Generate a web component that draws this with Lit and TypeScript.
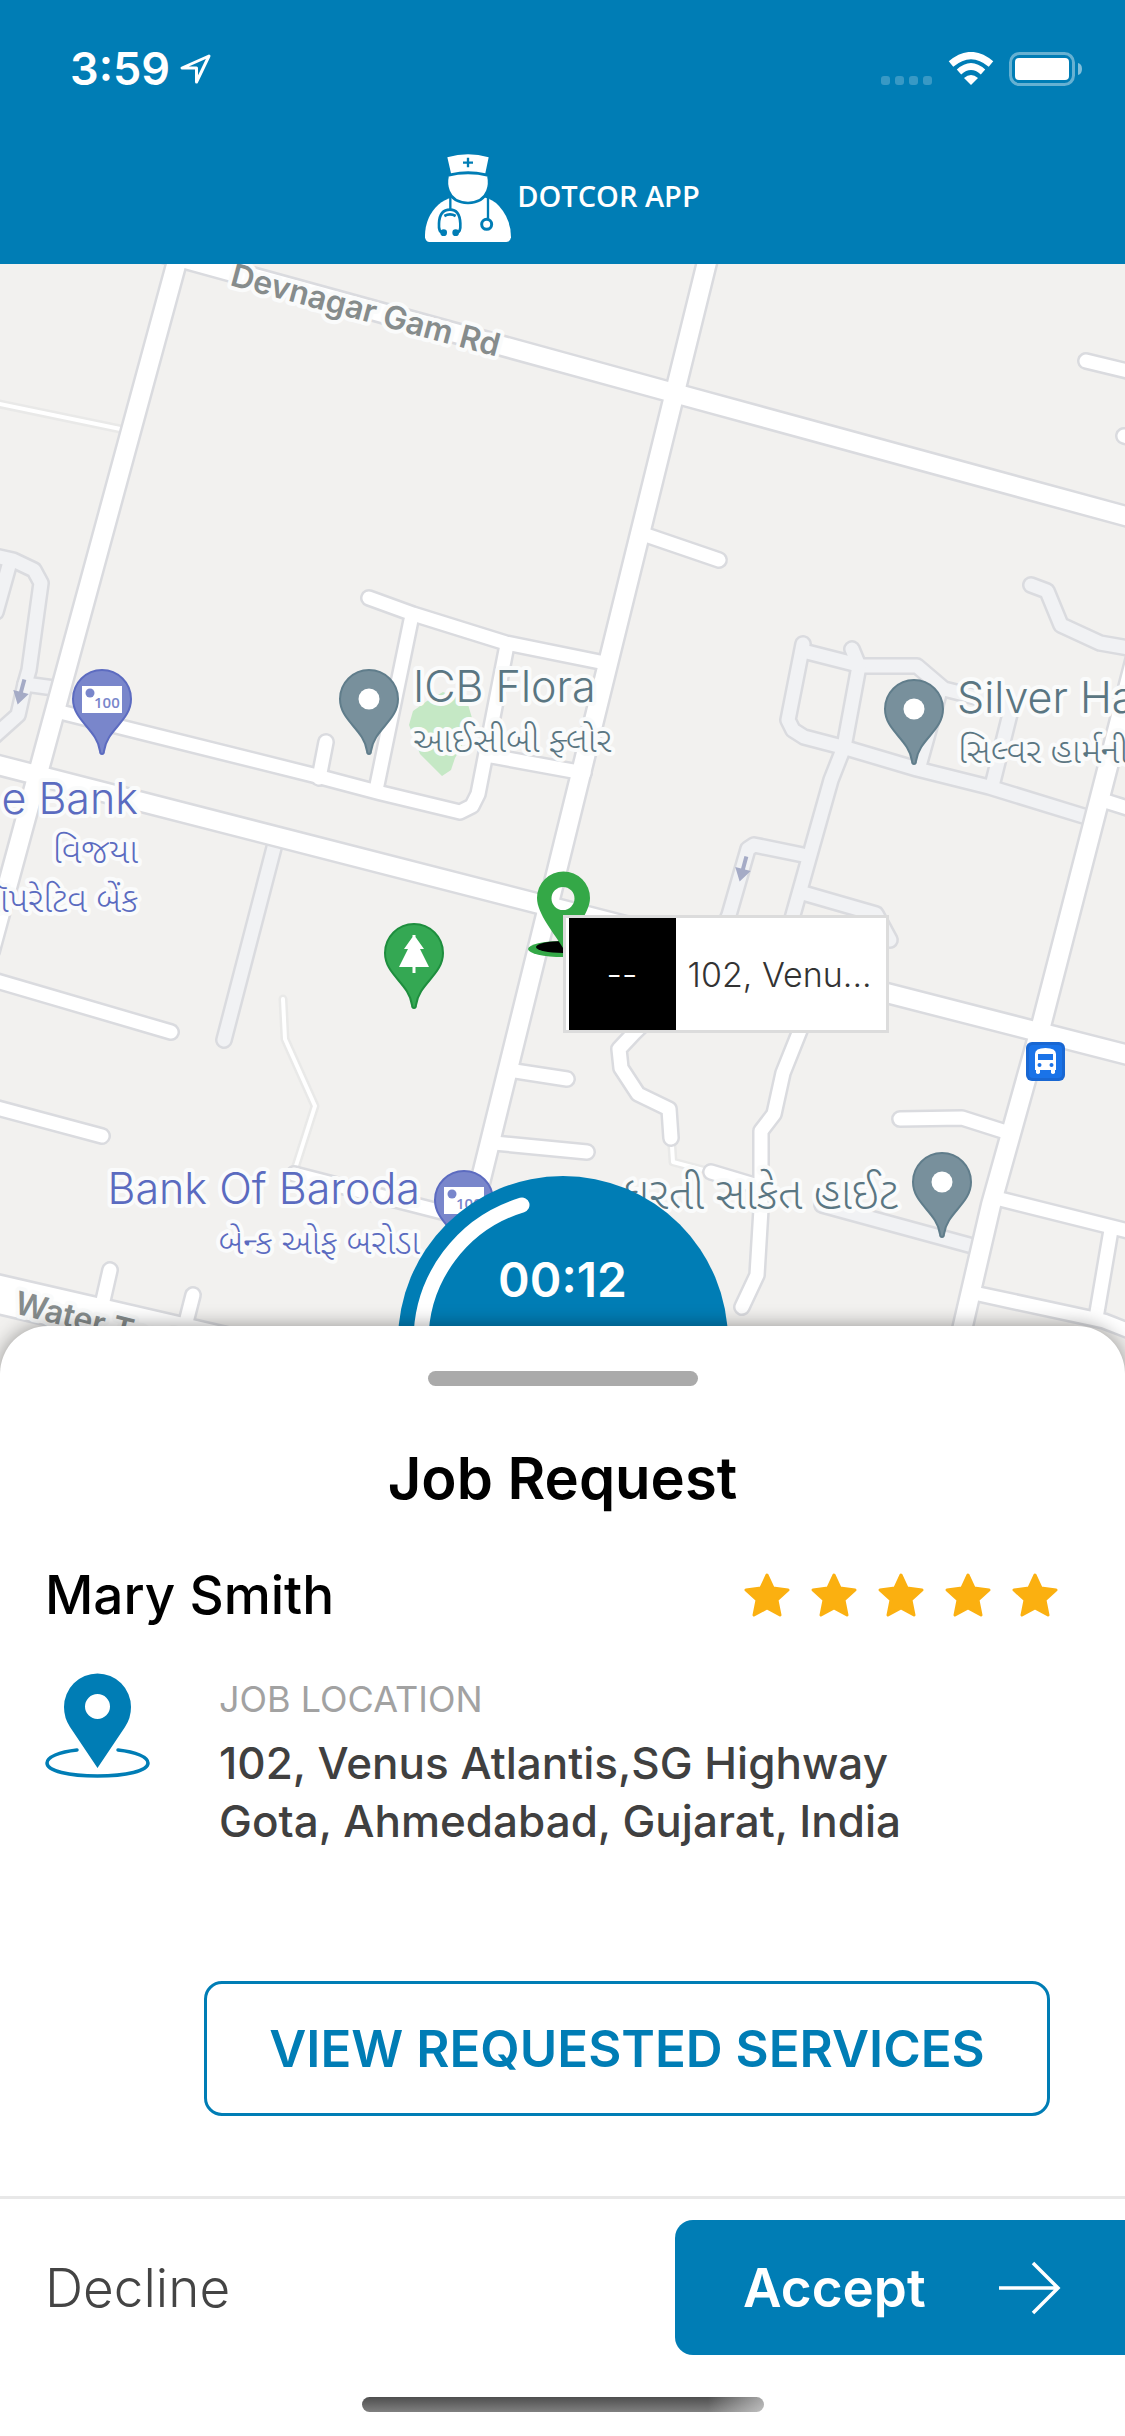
import { LitElement, html, svg, css } from "lit";
import { customElement, property } from "lit/decorators.js";

type Tone = "main" | "side" | "lane" | "path" | "wide";
interface Road { tone: Tone; points: string; }

/* Streets as polylines on the map canvas. */
const ROADS: Road[] = [
  { tone: "lane", points: "-10,555 13,560 34,570 41,583 29,670 25,684 18,715 -10,740" },
  { tone: "lane", points: "25,684 54,688" },
  { tone: "lane", points: "10,562 -4,612" },
  { tone: "lane", points: "803,644 788,720 793,730 804,737 846,748 917,769 989,787 1090,818" },
  { tone: "lane", points: "803,651 862,666 917,666 944,689 1012,706 993,782" },
  { tone: "lane", points: "852,649 859,666 844,747 831,780 793,915 770,1000" },
  { tone: "lane", points: "939,694 919,766" },
  { tone: "lane", points: "1031,585 1047,591 1061,625 1100,643 1140,650" },
  { tone: "lane", points: "803,855 754,845 748,849 729,915 710,960" },
  { tone: "lane", points: "803,893 876,914 890,940" },
  { tone: "lane", points: "276,840 224,1040" },
  { tone: "lane", points: "822,1205 980,1248" },
  { tone: "path", points: "-10,402 130,431" },
  { tone: "path", points: "283,999 285,1039 315,1106 294,1172" },
  { tone: "path", points: "671,1130 673,1162 711,1172" },
  { tone: "side", points: "369,598 413,614 506,643 600,662" },
  { tone: "side", points: "411,620 376,790" },
  { tone: "side", points: "507,645 478,794 472,806 460,812 381,793 313,775 60,712" },
  { tone: "side", points: "326,742 319,778" },
  { tone: "side", points: "486,755 584,773" },
  { tone: "side", points: "640,533 719,560" },
  { tone: "side", points: "1086,361 1140,374" },
  { tone: "side", points: "1124,436 1150,442" },
  { tone: "side", points: "-10,979 171,1032" },
  { tone: "side", points: "-10,1106 102,1136" },
  { tone: "side", points: "294,1174 450,1214" },
  { tone: "side", points: "508,1070 567,1079" },
  { tone: "side", points: "494,1143 587,1152" },
  { tone: "side", points: "660,1008 634,1033 619,1049 621,1068 638,1094 669,1109 671,1138" },
  { tone: "side", points: "808,1010 799,1033 783,1073 774,1114 761,1131 761,1209 757,1275 742,1307" },
  { tone: "side", points: "711,1172 761,1187" },
  { tone: "side", points: "900,1119 962,1118 1006,1132" },
  { tone: "side", points: "996,1198 1140,1234" },
  { tone: "side", points: "1111,1230 1096,1318" },
  { tone: "side", points: "974,1293 1104,1321 1140,1335" },
  { tone: "side", points: "1102,800 1140,812" },
  { tone: "wide", points: "-20,1290 97,1317 240,1350" },
  { tone: "side", points: "110,1270 102,1305" },
  { tone: "side", points: "193,1295 184,1330" },
  { tone: "main", points: "179,254 40,766 -10,950" },
  { tone: "main", points: "120,241 674,393 1140,520" },
  { tone: "main", points: "709,254 440,1345" },
  { tone: "main", points: "-10,763 1140,1058" },
  { tone: "main", points: "1138,650 1041,1026 991,1205 955,1360" },
];

const CASING: Record<Tone, number> = { main: 23, side: 18, lane: 18, path: 9, wide: 42 };

@customElement("area-map")
export class AreaMap extends LitElement {
  static styles = css`
    :host { display: block; position: absolute; inset: 0; }
    .canvas { display: block; width: 100%; height: 100%; background: #f2f1ef; }
    polyline { fill: none; stroke-linecap: round; stroke-linejoin: round; }
    .casing { stroke: #dadbdf; }
    .casing.path { stroke: #e9e9e8; }
    .fill { stroke: #ffffff; }
    .fill.lane { stroke: #f1f2f4; }
    .park { fill: #c5e8c5; }
    .direction { fill: #a5abc6; }
    .label {
      font-family: Inter, "Noto Sans", sans-serif;
      font-weight: 300;
      font-size: 43px;
      paint-order: stroke;
      stroke: #fafbfb;
      stroke-width: 8px;
      stroke-linejoin: round;
    }
    .local { font-family: "Noto Sans Gujarati", "Noto Sans", sans-serif; font-size: 35px; }
    .local.large { font-size: 44px; }
    .place { fill: #5a7682; }
    .bank { fill: #5b6bc0; }
    .street { fill: #868c8c; font-size: 32px; font-weight: 600; }
    .end { text-anchor: end; }
    .note { font-family: "Open Sans", sans-serif; font-size: 15px; font-weight: 600; fill: #7986cb; }
  `;

  private pin(x: number, y: number, fill: string, edge: string, glyph: unknown) {
    return svg`<g transform="translate(${x} ${y})">
      <path d="M0 55C-1 55-2 54-2 52C-5 30-29 22-29 0A29 29 0 0 1 29 0C29 22 5 30 2 52C2 54 1 55 0 55Z"
        fill=${fill} stroke=${edge} stroke-width="2"/>${glyph}</g>`;
  }

  private note() {
    return svg`<path d="M-20-13H20V14H-20Z" fill="#fff"/><circle cx="-12" cy="-6" r="4.5" fill="#7986cb"/>
      <text class="note" x="-8" y="9">100</text>`;
  }

  render() {
    const dot = svg`<circle r="10.5" fill="#fff"/>`;
    const tree = svg`<path d="M-1.5-18H1.5V-16L10-4H6L15 14H1.5V20H-1.5V14H-15L-6-4H-10L-1.5-16Z" fill="#fff"/>`;
    const arrow = svg`<path class="direction" d="M-2-13H2V0H8L0 13L-8 0H-2Z"/>`;
    const open = ROADS.filter((r) => r.tone === "lane" || r.tone === "path");
    const solid = ROADS.filter((r) => r.tone !== "lane" && r.tone !== "path");
    const draw = (roads: Road[]) => svg`
      ${roads.map((r) => svg`<polyline class="casing ${r.tone}" points=${r.points} stroke-width=${CASING[r.tone]}/>`)}
      ${roads.map((r) => svg`<polyline class="fill ${r.tone}" points=${r.points} stroke-width=${CASING[r.tone] - 5}/>`)}`;
    return html`
      <svg class="canvas" viewBox="0 264 1125 1107" preserveAspectRatio="xMidYMin slice">
        <path class="park" d="M443 692L467 701L472 718L467 737L455 758L451 770L442 776L420 754L409 725L413 711L427 701Z"/>
        ${draw(open)} ${draw(solid)}
        <g transform="translate(21 692) rotate(15)">${arrow}</g>
        <g transform="translate(743 869) rotate(15)">${arrow}</g>

        <text class="label street" transform="translate(229 285) rotate(15)">Devnagar Gam Rd</text>
        <text class="label street" transform="translate(13 1313) rotate(14)">Water Tank Rd</text>

        <text class="label place" x="413" y="702">ICB Flora</text>
        <text class="label place local" x="413" y="752">આઈસીબી ફ્લોર</text>
        <text class="label place" x="957" y="713">Silver Harmony</text>
        <text class="label place local" x="958" y="763">સિલ્વર હાર્મની</text>
        <text class="label place local large end" x="898" y="1209">ધરતી સાકેત હાઈટ</text>

        <text class="label bank end" x="138" y="814">e Bank</text>
        <text class="label bank local end" x="138" y="863">વિજયા</text>
        <text class="label bank local end" x="138" y="912">કોઑપરેટિવ બેંક</text>
        <text class="label bank end" x="420" y="1204">Bank Of Baroda</text>
        <text class="label bank local end" x="420" y="1254">બેન્ક ઓફ બરોડા</text>

        ${this.pin(102, 699, "#7986cb", "#5c6bc0", this.note())}
        ${this.pin(464, 1200, "#7986cb", "#5c6bc0", this.note())}
        ${this.pin(369, 699, "#78909c", "#607d8b", dot)}
        ${this.pin(914, 709, "#78909c", "#607d8b", dot)}
        ${this.pin(942, 1182, "#78909c", "#607d8b", dot)}
        ${this.pin(414, 953, "#34a853", "#1e8e3e", tree)}

        <g transform="translate(1026 1042)">
          <rect width="39" height="39" rx="6" fill="#1967d2"/>
          <rect x="3" y="3" width="33" height="33" rx="4" fill="#1a73e8"/>
          <path d="M9 12Q9 6 19.500 6Q30 6 30 12V28H29V31Q27 33 25 31V28H14V31Q12 33 10 31V28H9Z" fill="#fff"/>
          <path d="M12 12H27V18H12Z" fill="#1a73e8"/>
          <circle cx="13.500" cy="23" r="2" fill="#1a73e8"/><circle cx="25.500" cy="23" r="2" fill="#1a73e8"/>
        </g>

        <ellipse cx="563" cy="949" rx="35" ry="8" fill="#34a847"/>
        <ellipse cx="563" cy="947" rx="27" ry="6" fill="#000"/>
        <path fill="#34a847" fill-rule="evenodd" d="M563 948C555 934 537 914 537 898A26.500 26.500 0 0 1 590 898C590 914 571 934 563 948ZM563 887A11.500 11.500 0 1 0 563 910A11.500 11.500 0 1 0 563 887Z"/>
      </svg>`;
  }
}

@customElement("countdown-dial")
export class CountdownDial extends LitElement {
  @property() time = "";
  static styles = css`
    :host { display: grid; width: 330px; height: 330px; color: #fff; }
    .face, .time { grid-area: 1 / 1; }
    .face { width: 100%; height: 100%; }
    .time { justify-self: center; padding-top: 74px; font: 600 48px/60px Inter, sans-serif; }
  `;
  render() {
    return html`
      <svg class="face" viewBox="0 0 330 330" aria-hidden="true">
        <circle cx="165" cy="165" r="165" fill="#007db5"/>
        <path d="M124 29A142 142 0 0 0 23 165" fill="none" stroke="#fff" stroke-width="15" stroke-linecap="round"/>
      </svg>
      <div class="time" role="timer">${this.time}</div>`;
  }
}

@customElement("star-rating")
export class StarRating extends LitElement {
  @property({ type: Number }) value = 5;
  static styles = css`
    :host { display: flex; gap: 19px; }
    .star { width: 48px; height: 48px; fill: #fbb010; stroke: #fbb010; stroke-width: 3; stroke-linejoin: round; }
  `;
  render() {
    return Array.from({ length: this.value }, () => html`
      <svg class="star" viewBox="0 0 48 48" aria-hidden="true">
        <path d="M24 4L30 17L45 19L34 29L37 44L24 37L11 44L14 29L3 19L18 17Z"/>
      </svg>`);
  }
}

@customElement("app-root")
export class AppRoot extends LitElement {
  static styles = css`
    :host {
      display: flex;
      flex-direction: column;
      min-height: 100vh;
      background: #fff;
      font-family: Inter, "Noto Sans", sans-serif;
      color: #000;
    }
    button { font: inherit; cursor: pointer; }
    .top { background: #007db5; color: #fff; height: 264px; display: flex; flex-direction: column; }
    .status { display: flex; align-items: center; justify-content: space-between; height: 138px; padding: 0 42px 0 70px; }
    .clock { display: flex; align-items: center; gap: 10px; font-size: 45px; line-height: 56px; font-weight: 600; }
    .signals { display: flex; align-items: center; gap: 15px; }
    .brand { display: flex; justify-content: center; align-items: center; gap: 6px; height: 88px; padding: 16px 0 22px; }
    .brand-name { margin: 0; padding-bottom: 4px; font: 600 29px/36px "Open Sans", sans-serif; }

    .map { position: relative; flex: 1 0 1107px; overflow: hidden; }
    .callout {
      position: absolute; left: 50%; top: 651px;
      display: flex; box-sizing: border-box; width: 326px; height: 118px;
      padding: 0 0 0 3px; border: 3px solid #dcdcdc; background: #fff;
      font-weight: 300; font-size: 34px; color: #333;
    }
    .eta { display: grid; place-items: center; width: 107px; background: #000; color: #fff; }
    .spot { align-self: center; padding-left: 12px; }
    .dial { position: absolute; left: 50%; bottom: -135px; translate: -50% 0; }

    .sheet {
      position: relative; margin-top: -45px; background: #fff;
      border-radius: 48px 48px 0 0; box-shadow: 0 0 20px rgba(0, 0, 0, 0.4);
      display: flex; flex-direction: column;
    }
    .grip { align-self: center; width: 270px; height: 15px; margin-top: 45px; border-radius: 8px; background: #aaa; }
    .title { margin: 60px 0 0; text-align: center; font-size: 58px; line-height: 64px; font-weight: 600; }
    .person { display: flex; justify-content: space-between; align-items: center; margin-top: 52px; padding: 0 66px 0 45px; }
    .name { margin: 0; font-size: 53px; line-height: 66px; font-weight: 500; }
    .where { display: flex; gap: 69px; align-items: flex-start; margin-top: 45px; padding: 0 45px; }
    .pin { flex: none; width: 105px; height: 105px; }
    .caption { margin: 6px 0 0; font-size: 36px; line-height: 40px; font-weight: 400; color: #a2a2a2; }
    .address { margin: 15px 0 0; font-size: 44px; line-height: 58px; font-weight: 500; font-style: normal; color: #404040; }
    .services {
      height: 135px; margin: 131px 75px 80px 204px; border: 3px solid #007db5; border-radius: 18px;
      background: #fff; color: #007db5; font-size: 51px; font-weight: 600; white-space: nowrap;
    }
    .actions { display: flex; justify-content: space-between; align-items: center; padding-top: 21px; border-top: 3px solid #e8e8e8; }
    .decline { padding: 0 45px; border: 0; background: none; color: #444; font-weight: 300; font-size: 53px; }
    .accept {
      display: flex; justify-content: space-between; align-items: center; width: 40%; height: 135px;
      padding: 0 64px 0 68px; border: 0; border-radius: 18px 0 0 18px; background: #007db5; color: #fff;
      font-weight: 600; font-size: 53px;
    }
    .home { align-self: center; width: 402px; height: 15px; margin: 42px 0 24px; border-radius: 8px; background: linear-gradient(to right, transparent 86%, rgba(255, 255, 255, 0.5)), linear-gradient(#4e4e4e, #808080); }
  `;

  render() {
    return html`
      <header class="top">
        <div class="status">
          <div class="clock">
            <span>3:59</span>
            <svg width="32" height="32" viewBox="0 0 32 32" aria-hidden="true">
              <path d="M29 3L2 15H16.500V29Z" fill="none" stroke="#fff" stroke-width="3" stroke-linejoin="round"/>
            </svg>
          </div>
          <div class="signals" aria-hidden="true">
            <svg width="52" height="34" viewBox="0 0 52 34" fill="#fff" fill-opacity=".22">
              <rect x="0" y="24" width="9" height="9" rx="3"/><rect x="14" y="24" width="9" height="9" rx="3"/>
              <rect x="28" y="24" width="9" height="9" rx="3"/><rect x="42" y="24" width="9" height="9" rx="3"/>
            </svg>
            <svg width="46" height="34" viewBox="0 0 46 34">
              <path d="M3 12Q23-5 43 12" fill="none" stroke="#fff" stroke-width="7"/>
              <path d="M11 20Q23 9 35 20" fill="none" stroke="#fff" stroke-width="6.500"/>
              <path d="M16 26Q23 20 30 26L23 33Z" fill="#fff"/>
            </svg>
            <svg width="74" height="34" viewBox="0 0 74 34">
              <rect x="1.500" y="1.500" width="63" height="31" rx="9" fill="none" stroke="#fff" stroke-opacity=".4" stroke-width="3"/>
              <rect x="6" y="6" width="54" height="22" rx="4" fill="#fff"/>
              <path d="M69 11Q73 12 73 17Q73 22 69 23Z" fill="#fff" fill-opacity=".5"/>
            </svg>
          </div>
        </div>
        <div class="brand">
          <svg width="86" height="88" viewBox="0 0 258 264" aria-hidden="true">
            <path fill="#fff" d="M0 250Q-1 190 40 152Q58 137 84 130H176Q204 136 222 156Q258 196 258 250Q256 264 244 264H14Q2 264 0 250Z"/>
            <path fill="#fff" stroke="#007db5" stroke-width="8" d="M68 64Q129 50 190 64Q196 92 187 112Q174 146 129 147Q84 146 71 112Q62 92 68 64Z"/>
            <path fill="#fff" d="M67 10Q129-8 191 10L181 58Q129 46 78 58Z"/>
            <g fill="none" stroke="#007db5" stroke-width="7">
              <path d="M129 11V40M114 26H144"/>
              <path d="M76 130V168M189 130V194"/>
              <path d="M55 236Q40 238 42 208Q44 167 75 167Q104 167 106 208Q108 238 93 236M58 186Q75 176 92 186" stroke-width="8"/>
              <circle cx="185" cy="211" r="15" stroke-width="9"/>
            </g>
            <circle cx="56" cy="236" r="10" fill="#007db5"/><circle cx="92" cy="236" r="10" fill="#007db5"/>
          </svg>
          <h1 class="brand-name">DOTCOR APP</h1>
        </div>
      </header>

      <section class="map" aria-label="Map">
        <area-map></area-map>
        <button class="callout" type="button">
          <span class="eta">--</span><span class="spot">102, Venu...</span>
        </button>
        <countdown-dial class="dial" time="00:12"></countdown-dial>
      </section>

      <main class="sheet">
        <div class="grip"></div>
        <h2 class="title">Job Request</h2>
        <div class="person">
          <h3 class="name">Mary Smith</h3>
          <star-rating role="img" aria-label="5 stars" .value=${5}></star-rating>
        </div>
        <div class="where">
          <svg class="pin" viewBox="0 0 105 105" aria-hidden="true">
            <path fill="#007db5" fill-rule="evenodd" d="M52.500 95L25 54Q19 45 19 34A33.500 33.500 0 0 1 86 34Q86 45 80 54ZM52.500 21A12.500 12.500 0 1 0 52.500 46A12.500 12.500 0 1 0 52.500 21Z"/>
            <path d="M32 77C14 79 2 84 2 90C2 98 24 103 52.500 103S103 98 103 90C103 84 91 79 73 77" fill="none" stroke="#007db5" stroke-width="3.500" stroke-linecap="round"/>
          </svg>
          <div>
            <p class="caption">JOB LOCATION</p>
            <address class="address">102, Venus Atlantis,SG Highway<br>Gota, Ahmedabad, Gujarat, India</address>
          </div>
        </div>
        <button class="services" type="button">VIEW REQUESTED SERVICES</button>
        <div class="actions">
          <button class="decline" type="button">Decline</button>
          <button class="accept" type="button">Accept
            <svg width="62" height="54" viewBox="0 0 62 54" fill="none" stroke="#fff" stroke-width="3.500" aria-hidden="true">
              <path d="M0 27H59M34 2L59 27L34 52"/>
            </svg>
          </button>
        </div>
        <div class="home"></div>
      </main>`;
  }
}
